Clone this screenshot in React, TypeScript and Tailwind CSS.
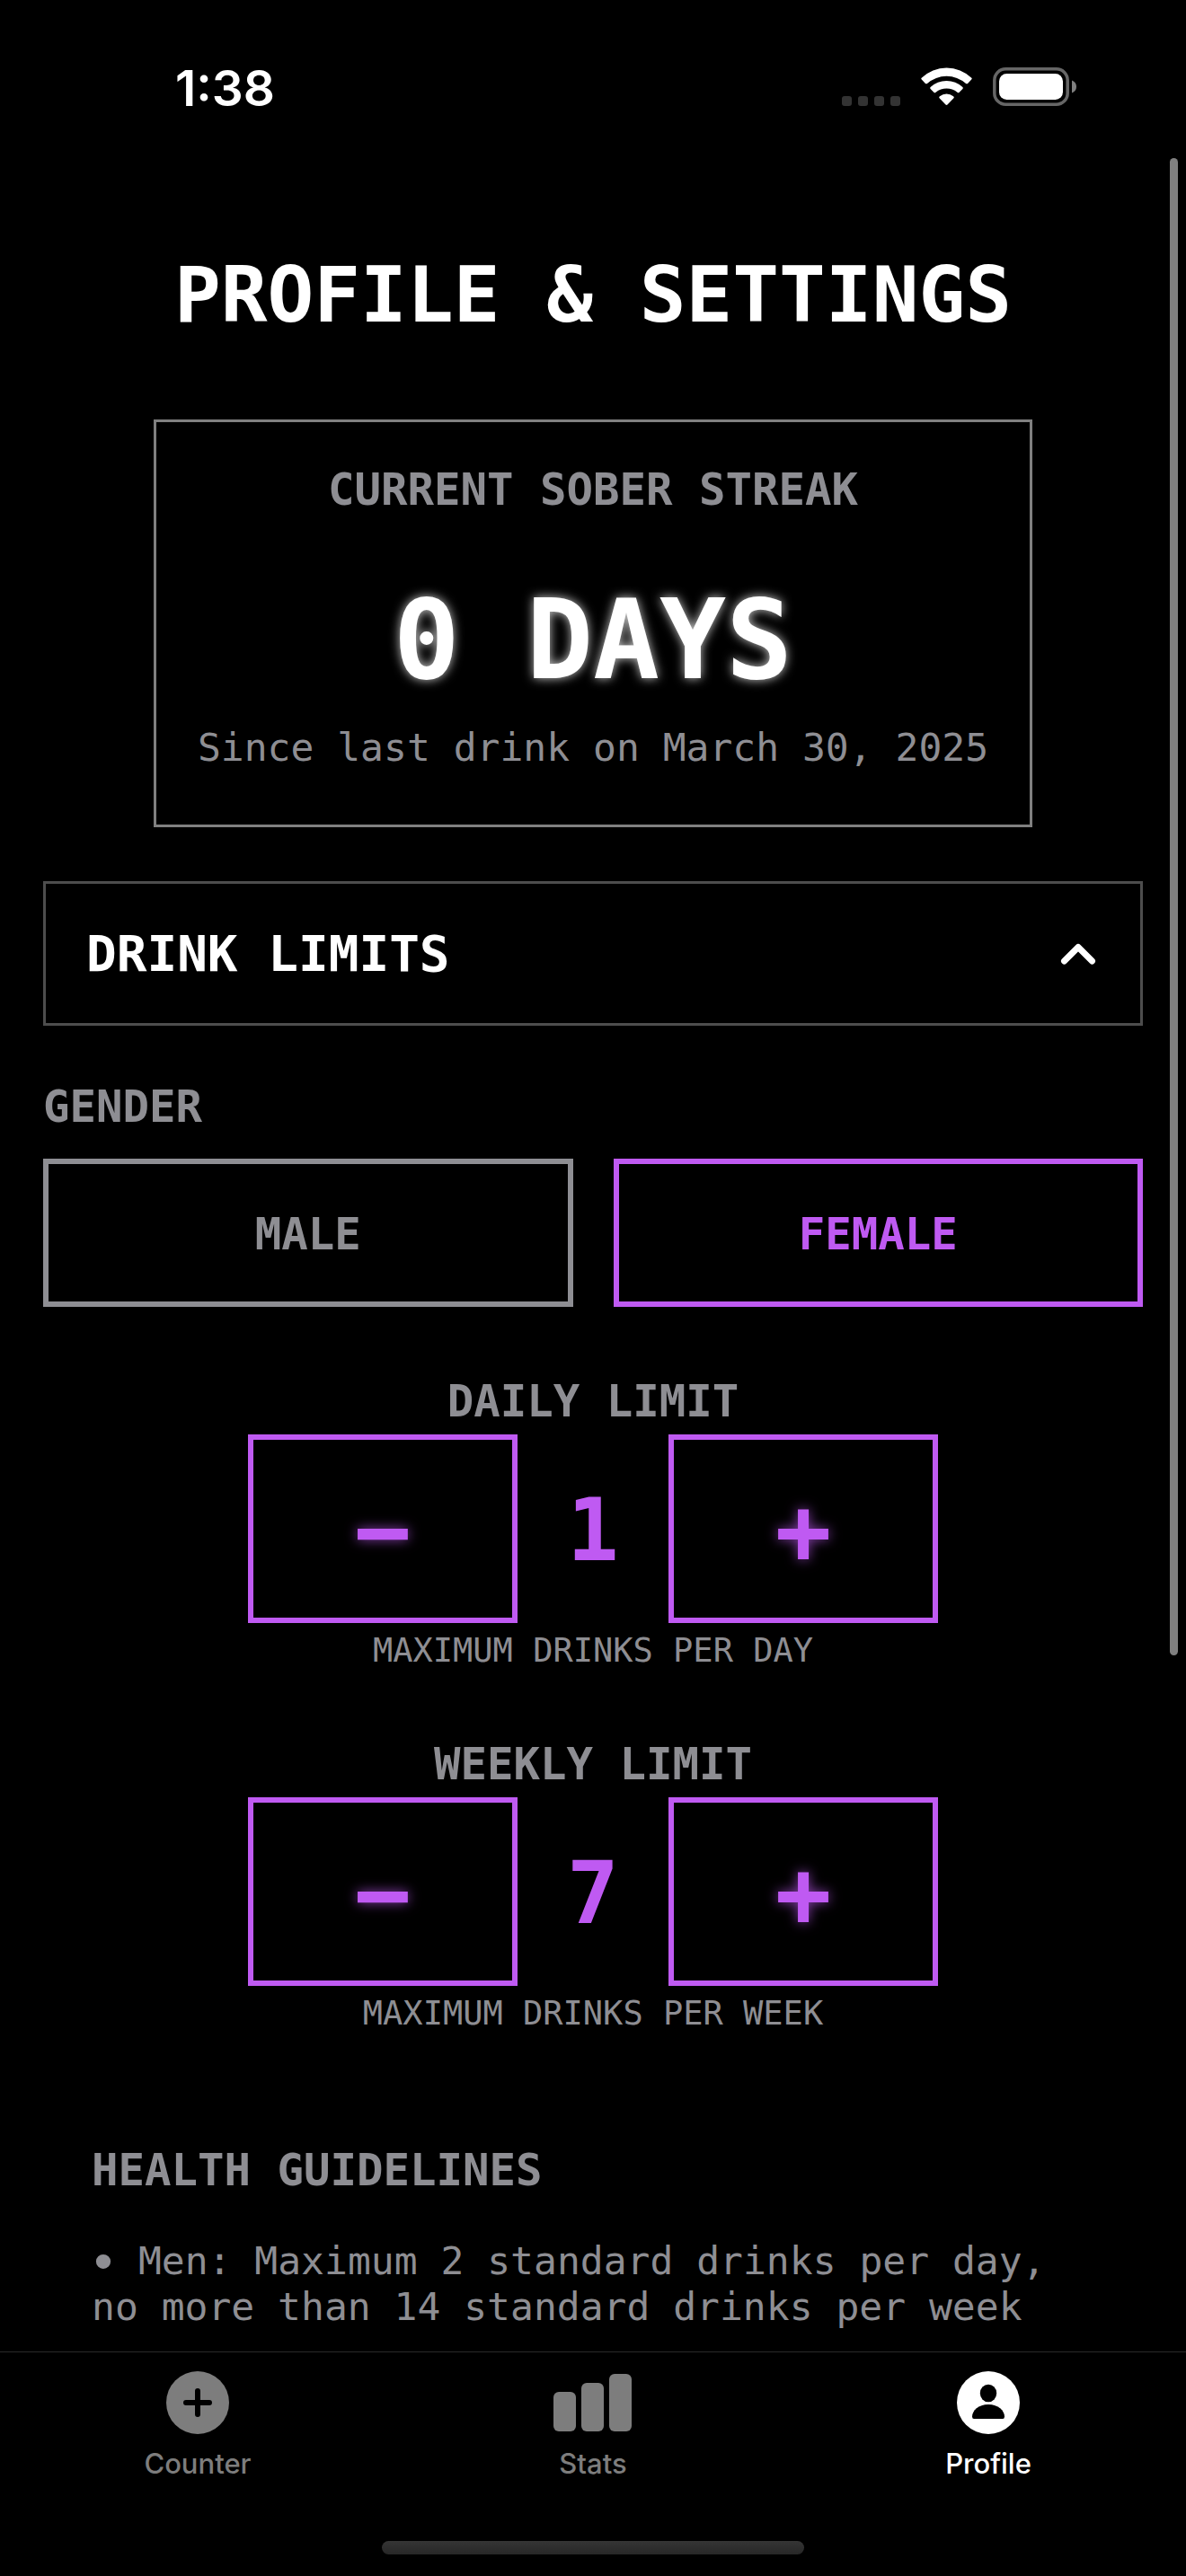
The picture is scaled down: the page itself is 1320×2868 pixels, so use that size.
import { useState } from "react";

function StatusBar() {
  return (
    <header className="flex items-end justify-between pt-[75px] pb-[58px] pl-[195px] pr-[122px] font-['Inter',sans-serif]">
      <time className="text-[55px] leading-10 font-semibold">1:38</time>
      <div className="flex items-end gap-[23px]">
        <div className="flex gap-[7px]" aria-hidden="true">
          {[0, 1, 2, 3].map((dot) => (
            <span key={dot} className="size-[11px] rounded-[3px] bg-[#333333]" />
          ))}
        </div>
        <svg className="h-[43px] w-[57px]" viewBox="0 0 172 129" fill="white" aria-label="Wi-Fi">
          <path d="M3 41 Q-1 38 2 35 A121 121 0 0 1 170 35 Q173 38 169 41 L157 54 Q154 56 151 54 A98 98 0 0 0 21 54 Q18 56 15 54 Z" />
          <path d="M32 72 Q29 69 32 66 A79 79 0 0 1 140 66 Q143 69 140 72 L128 84 Q125 86 122 83 A59 59 0 0 0 50 83 Q47 86 44 84 Z" />
          <path d="M62 103 Q59 100 63 97 A37 37 0 0 1 109 97 Q113 100 110 103 L89 125 Q86 128 83 125 Z" />
        </svg>
        <svg className="h-[43px] w-[93px]" viewBox="0 0 93 43" aria-label="Battery full">
          <rect x="1.8" y="1.8" width="81.4" height="39.4" rx="12.5" fill="none" stroke="#666666" strokeWidth="3.5" />
          <rect x="7" y="7" width="71" height="29" rx="8.5" fill="white" />
          <path d="M88 14.5 Q93 16.5 93 21.5 T88 28.5 Z" fill="#808080" />
        </svg>
      </div>
    </header>
  );
}

function StreakCard() {
  return (
    <section className="mt-[89px] self-center border-[3px] border-[#808080] px-[46px] pt-[46px] pb-[61px] text-center">
      <h2 className="text-[49px] leading-[60px] font-bold text-[#8e8e93]">CURRENT SOBER STREAK</h2>
      <p className="mt-[64px] text-[123px] leading-[146px] font-bold [text-shadow:0_0_12px_rgba(255,255,255,0.8)]">
        0 DAYS
      </p>
      <p className="mt-[21px] text-[43px] leading-[50px] text-[#8e8e93]">Since last drink on March 30, 2025</p>
    </section>
  );
}

function GenderButton({ label, active, onSelect }: { label: string; active: boolean; onSelect: () => void }) {
  return (
    <button
      type="button"
      aria-pressed={active}
      onClick={onSelect}
      className={`flex-1 border-6 pt-12 pb-11 text-[49px] leading-[61px] font-bold ${
        active ? "border-[#bf5af2] text-[#bf5af2]" : "border-[#8e8e93] text-[#8e8e93]"
      }`}
    >
      {label}
    </button>
  );
}

const stepButton =
  "w-[300px] border-6 border-[#bf5af2] pt-[42px] pb-9 text-[104px] leading-[120px] font-bold [text-shadow:0_0_14px_rgba(191,90,242,0.7)]";

function LimitStepper({ title, unit, initial }: { title: string; unit: string; initial: number }) {
  const [value, setValue] = useState(initial);
  return (
    <section className="mt-[76px] text-center">
      <h3 className="text-[49px] leading-[60px] font-bold text-[#8e8e93]">{title}</h3>
      <div className="mt-[6px] mb-[9px] flex items-center justify-center text-[#bf5af2]">
        <button
          type="button"
          aria-label={`Decrease ${title}`}
          className={stepButton}
          onClick={() => setValue(Math.max(0, value - 1))}
        >
          −
        </button>
        <output className="w-[168px] pt-1 text-[96px] leading-[120px] font-bold">{value}</output>
        <button
          type="button"
          aria-label={`Increase ${title}`}
          className={stepButton}
          onClick={() => setValue(value + 1)}
        >
          +
        </button>
      </div>
      <p className="text-[37px] leading-[43px] text-[#8e8e93]">{unit}</p>
    </section>
  );
}

function TabBar() {
  const tab = "flex flex-1 flex-col items-center gap-[15px]";
  return (
    <nav className="mt-auto border-t border-[#2a2a2a] bg-black pt-[21px] pb-6 font-['Inter',sans-serif] text-[31px] leading-9 font-medium text-[#7d7d7d]">
      <div className="flex">
        <a href="#counter" className={tab}>
          <svg className="size-[70px]" viewBox="0 0 70 70" aria-hidden="true">
            <circle cx="35" cy="35" r="35" fill="#7d7d7d" />
            <path d="M35 22 V48 M22 35 H48" stroke="black" strokeWidth="6" strokeLinecap="round" />
          </svg>
          Counter
        </a>
        <a href="#stats" className={tab}>
          <svg className="h-[70px] w-[88px]" viewBox="0 0 88 70" fill="#7d7d7d" aria-hidden="true">
            <rect x="0" y="23" width="25" height="44" rx="6" />
            <rect x="31" y="13" width="25" height="54" rx="6" />
            <rect x="62" y="3" width="25" height="64" rx="6" />
          </svg>
          Stats
        </a>
        <a href="#profile" aria-current="page" className={`${tab} text-white`}>
          <svg className="size-[70px]" viewBox="0 0 70 70" aria-hidden="true">
            <circle cx="35" cy="35" r="35" fill="white" />
            <ellipse cx="35" cy="24.5" rx="9.2" ry="9.8" fill="black" />
            <path d="M17 50.5 C17 44 24 37 35 37 S53 44 53 50.5 Q53 53 51 53 H19 Q17 53 17 50.5 Z" fill="black" />
          </svg>
          Profile
        </a>
      </div>
      <div className="mx-auto mt-[68px] h-[15px] w-[470px] rounded-full bg-linear-to-b from-[#353535] to-[#272727]" />
    </nav>
  );
}

export default function App() {
  const [gender, setGender] = useState("female");
  const [open, setOpen] = useState(true);

  return (
    <div className="relative flex min-h-screen flex-col bg-black font-['DejaVu_Sans_Mono',monospace] text-white">
      <StatusBar />
      <div className="absolute top-44 right-[9px] h-[1667px] w-[9px] rounded-full bg-[#808080]" aria-hidden="true" />
      <main className="flex flex-col px-12 pt-[102px] pb-6">
        <h1 className="text-center text-[86px] leading-[100px] font-bold">PROFILE &amp; SETTINGS</h1>
        <StreakCard />
        <button
          type="button"
          aria-expanded={open}
          onClick={() => setOpen(!open)}
          className="mt-[60px] flex items-center justify-between border-[3px] border-[#4d4d4d] py-[45px] pr-[49px] pl-[45px] text-[56px] leading-[65px] font-bold"
        >
          DRINK LIMITS
          <svg className="h-6 w-10" viewBox="0 0 40 24" fill="none" aria-hidden="true">
            <path d="M4.5 20 L20 4.5 L35.5 20" stroke="white" strokeWidth="7" strokeLinecap="round" strokeLinejoin="round" />
          </svg>
        </button>
        {open && (
          <div className="flex flex-col">
            <h2 className="mt-[61px] text-[49px] leading-[60px] font-bold text-[#8e8e93]">GENDER</h2>
            <div className="mt-[27px] flex gap-[45px]">
              <GenderButton label="MALE" active={gender === "male"} onSelect={() => setGender("male")} />
              <GenderButton label="FEMALE" active={gender === "female"} onSelect={() => setGender("female")} />
            </div>
            <LimitStepper title="DAILY LIMIT" unit="MAXIMUM DRINKS PER DAY" initial={1} />
            <LimitStepper title="WEEKLY LIMIT" unit="MAXIMUM DRINKS PER WEEK" initial={7} />
            <section className="mt-[124px] px-[54px] text-[#8e8e93]">
              <h2 className="text-[49px] leading-[60px] font-bold">HEALTH GUIDELINES</h2>
              <p className="mt-[45px] text-[43px] leading-[51px]">
                <span className="inline-flex h-[51px] w-[26px] items-center justify-center align-top font-['Liberation_Sans',sans-serif] text-[60px]">
                  •
                </span>{" "}
                Men: Maximum 2 standard drinks per day, no more than 14 standard drinks per week
              </p>
            </section>
          </div>
        )}
      </main>
      <TabBar />
    </div>
  );
}
